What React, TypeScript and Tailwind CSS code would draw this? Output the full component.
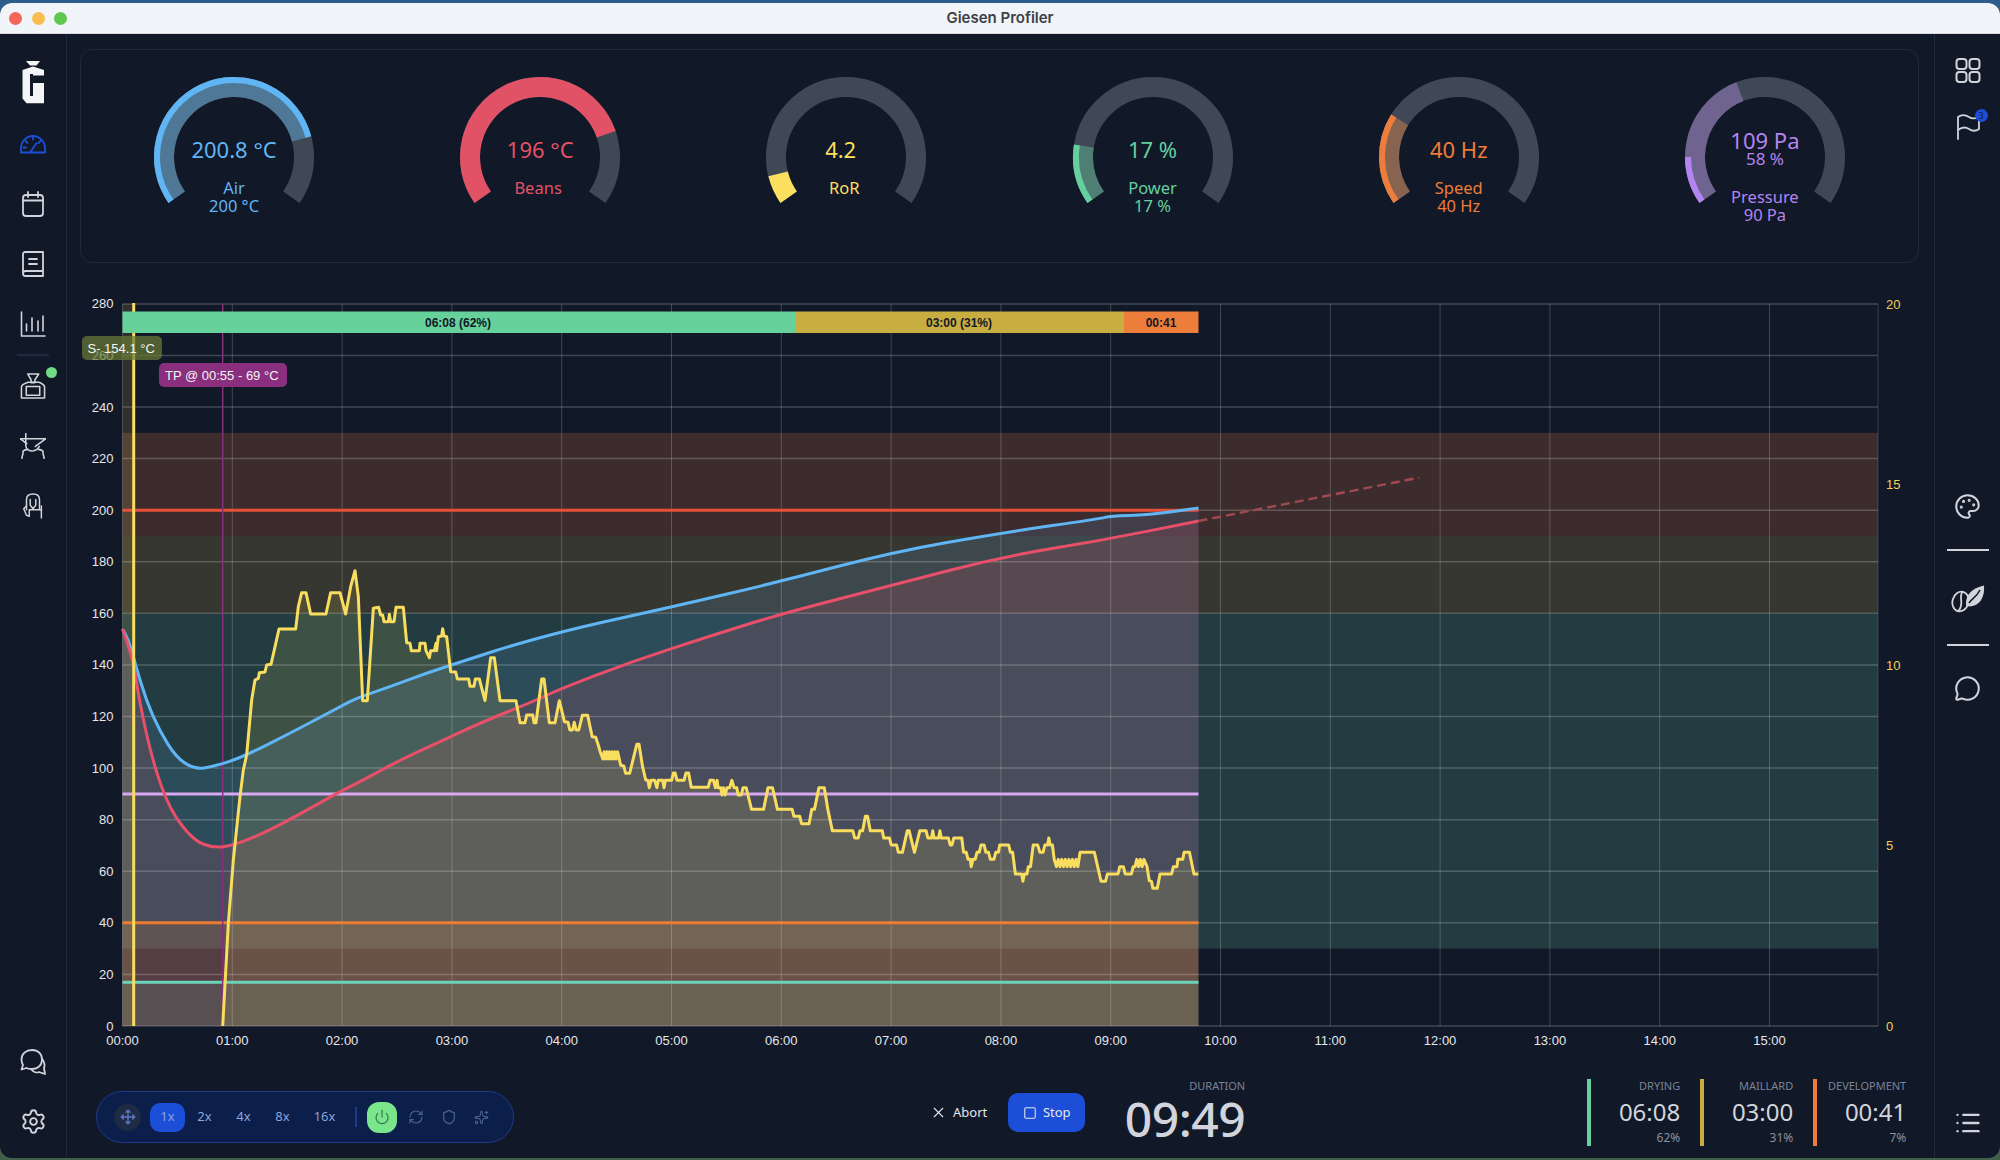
import { List, MessageCircle, Move, Palette, Power, RefreshCw, Settings, Shield, Sparkles, Square, X } from "lucide-react";

type Pt = [number, number];

const LEFT = 122.5;
const END = 1198.5;
const RIGHT = 1878;
const TOP = 304;
const BOTTOM = 1026;

const xAt = (min: number) => LEFT + min * 109.8;
const yAt = (v: number) => BOTTOM - v * 2.579;

const z8 = (p: Pt[]): Pt[] => p.map(([x, y]) => [80 + x / 3, 290 + y / 3]);
const z9 = (p: Pt[]): Pt[] => p.map(([x, y]) => [80 + x / 3, 700 + y / 3]);
const z10 = (p: Pt[]): Pt[] => p.map(([x, y]) => [560 + x / 2.24, 640 + y / 3]);

const zig = (x0: number, x1: number, step: number, a: number, b: number): Pt[] => {
  const out: Pt[] = [];
  let flip = false;
  for (let x = x0; x <= x1; x += step) {
    out.push([x, flip ? a : b]);
    flip = !flip;
  }
  return out;
};

const line = (p: Pt[]) => "M" + p.map((q) => q.join(" ")).join("L");

const smooth = (p: Pt[]) => {
  let d = `M${p[0][0]} ${p[0][1]}`;
  for (let i = 1; i < p.length - 1; i++) {
    const mx = (p[i][0] + p[i + 1][0]) / 2;
    const my = (p[i][1] + p[i + 1][1]) / 2;
    d += `Q${p[i][0]} ${p[i][1]} ${mx} ${my}`;
  }
  const last = p[p.length - 1];
  return d + `L${last[0]} ${last[1]}`;
};

const closeArea = `L${END} ${BOTTOM}L${LEFT} ${BOTTOM}Z`;

const air: Pt[] = [
  [122.5, 629], [128, 638], [135, 663], [146, 700], [160, 731.7], [176.7, 758], [195, 769.3], [213, 766.7], [243, 757],
  [293, 731.7], [340, 706.7], [356.7, 698], [390, 686.7], [426.7, 673], [466.7, 660], [513, 645], [580, 627], [672, 607],
  [780, 581.6], [893, 552], [1001, 533], [1100, 518.7], [1110, 516], [1148.5, 515], [1198.5, 508],
];

const beans: Pt[] = [
  [122.5, 629], [133, 657], [139, 700], [153, 763], [170, 810], [193, 840], [213, 848], [233, 845.7], [267, 831.7],
  [307, 810], [340, 791.7], [360, 781.7], [400, 760], [440, 741.7], [480, 723], [536.7, 700], [560, 689], [631.4, 661.7],
  [707, 637], [780.6, 614], [893, 585], [1001, 557], [1100, 540.7], [1198.5, 521],
];

// curve only, the drop at charge is drawn on its own
const ror: Pt[] = [
  [222.7, BOTTOM],
  ...z9([[445, 670], [460, 480], [480, 290], [490, 210], [500, 165], [515, 0]]),
  ...z8([
    [525, 1170], [535, 1165], [538, 1148], [555, 1146], [560, 1125], [573, 1123], [597, 1017], [647, 1017], [655, 950],
    [665, 908], [678, 908], [692, 972], [738, 972], [752, 908], [780, 908], [797, 972], [812, 890], [825, 842], [835, 920],
    [848, 1232], [862, 1232], [880, 955], [896, 952], [902, 975], [908, 975], [912, 995], [925, 995], [928, 973], [932, 995],
    [942, 995], [948, 952], [970, 952], [980, 1058], [990, 1060], [994, 1082], [1018, 1082], [1020, 1060], [1035, 1060],
    [1038, 1082], [1048, 1103], [1052, 1082], [1063, 1082], [1068, 1060], [1070, 1082], [1075, 1040], [1085, 1038], [1088, 1016],
    [1092, 1038], [1100, 1040], [1112, 1145], [1127, 1146], [1132, 1167], [1166, 1167], [1170, 1189], [1182, 1189], [1186, 1167],
    [1198, 1167], [1215, 1232], [1232, 1103], [1243, 1103], [1260, 1232], [1308, 1232],
  ]),
  [520, 722.7], [525, 722.7], [526.7, 715], [532.7, 715], [534, 722.7], [536, 722.7], [541.7, 679], [544, 679], [549.3, 722.7],
  [555, 722.7], [559.3, 700.7],
  ...z10([
    [10, 245], [18, 247], [22, 270], [28, 270], [32, 247], [36, 270], [42, 270], [50, 226], [62, 226], [72, 290], [80, 292],
    [85, 312], [90, 335], ...zig(96, 130, 3, 335, 357), [136, 376], [143, 378], [147, 400], [156, 400], [172, 313], [177, 313],
    [185, 380], [192, 420], [197, 421], [200, 443], [204, 421], [212, 421], [217, 443], [220, 421], [230, 421], [233, 443],
    [236, 421], [250, 421], [254, 399], [258, 399], [262, 421], [278, 421], [282, 399], [288, 399], [294, 442], [332, 442],
    [336, 421], [344, 421], [348, 443], [352, 421], [354, 443], [360, 443], [363, 465], [366, 443], [370, 465], [374, 443],
    [380, 443], [385, 421], [390, 443], [396, 443], [399, 465], [406, 465], [410, 443], [417, 443], [429, 508], [456, 508],
    [466, 443], [476, 443], [487, 508], [520, 508], [524, 529], [537, 529], [541, 551], [558, 551], [564, 508], [570, 508],
    [580, 443], [592, 443], [600, 508], [610, 572], [656, 572], [660, 594], [668, 594], [672, 572], [678, 572], [684, 529],
    [689, 529], [695, 572], [722, 572], [725, 594], [738, 594], [742, 615], [754, 615], [758, 637], [767, 637], [778, 572],
    [782, 572], [794, 637], [806, 572], [820, 572], [824, 594], [832, 594], [835, 572], [838, 594], [848, 594], [851, 572],
    [854, 594], [870, 594], [874, 615], [878, 615], [882, 594], [900, 594], [904, 637], [910, 637], [914, 658], [919, 658],
    [921, 680], [925, 658], [930, 658], [934, 637], [939, 637], [943, 615], [950, 615], [954, 637], [960, 637], [964, 658],
    [972, 658], [976, 637], [982, 637], [985, 615], [1005, 615], [1009, 637], [1014, 637], [1020, 702], [1034, 702], [1037, 724],
    [1040, 702], [1046, 702], [1049, 680], [1054, 680], [1060, 615], [1070, 615], [1075, 637], [1082, 637], [1086, 615], [1092, 615],
    [1095, 594], [1098, 615], [1103, 615], [1107, 658], ...zig(1112, 1160, 4, 658, 680), [1165, 637], [1197, 637], [1212, 724],
    [1222, 724], [1226, 702], [1250, 702], [1254, 680], [1262, 680], [1266, 702], [1280, 702], [1284, 680],
    ...zig(1288, 1310, 4, 658, 680), [1315, 680], [1320, 722], [1325, 724], [1328, 745], [1338, 745], [1344, 702], [1370, 702],
    [1374, 680], [1382, 680], [1384, 658], [1395, 658], [1398, 637], [1410, 637], [1420, 702], [1430, 702],
  ]),
];

const rorArea: Pt[] = [[LEFT, TOP], [133.7, TOP], [133.7, BOTTOM], ...ror];

const hLines = [
  { v: 200, c: "#e8503a" },
  { v: 90, c: "#d8a7f0" },
  { v: 40, c: "#ed7d30" },
  { v: 17, c: "#6ad4bb" },
];

const Chart = () => (
  <svg width={1867} height={770} viewBox="67 290 1867 770" className="block [font-family:'Liberation_Sans',sans-serif]">
    {/* target zones */}
    <rect x={LEFT} y={yAt(230)} width={RIGHT - LEFT} height={yAt(190) - yAt(230)} fill="#3d2c2e" />
    <rect x={LEFT} y={yAt(190)} width={RIGHT - LEFT} height={yAt(160) - yAt(190)} fill="#373731" />
    <rect x={LEFT} y={yAt(160)} width={RIGHT - LEFT} height={yAt(30) - yAt(160)} fill="#233c42" />

    {/* areas */}
    <path d={smooth(air) + closeArea} fill="rgba(96,180,240,0.14)" />
    <path d={smooth(beans) + closeArea} fill="rgba(226,82,102,0.16)" />
    <rect x={LEFT} y={yAt(40)} width={END - LEFT} height={BOTTOM - yAt(40)} fill="rgba(237,125,48,0.15)" />
    <rect x={LEFT} y={yAt(17)} width={END - LEFT} height={BOTTOM - yAt(17)} fill="rgba(106,212,187,0.12)" />
    <path d={line(rorArea) + closeArea} fill="rgba(249,221,95,0.13)" />

    {/* grid */}
    {Array.from({ length: 15 }, (_, i) => (i + 1) * 20).map((v) => (
      <line key={v} x1={LEFT} x2={RIGHT} y1={yAt(v)} y2={yAt(v)} stroke="rgba(255,255,255,0.2)" strokeWidth={1.5} />
    ))}
    {Array.from({ length: 16 }, (_, i) => i).map((m) => (
      <line key={m} x1={xAt(m)} x2={xAt(m)} y1={TOP} y2={BOTTOM} stroke="rgba(255,255,255,0.2)" strokeWidth={1} />
    ))}
    <line x1={RIGHT} x2={RIGHT} y1={TOP} y2={BOTTOM} stroke="rgba(255,255,255,0.15)" strokeWidth={1} />
    <line x1={LEFT} x2={RIGHT} y1={BOTTOM} y2={BOTTOM} stroke="rgba(255,255,255,0.2)" strokeWidth={1.5} />

    {hLines.map((l) => (
      <line key={l.v} x1={LEFT} x2={END} y1={yAt(l.v)} y2={yAt(l.v)} stroke={l.c} strokeWidth={3} />
    ))}

    <line x1={222.7} x2={222.7} y1={TOP} y2={BOTTOM} stroke="#8a2f7e" strokeWidth={1.5} />

    {/* axes */}
    {Array.from({ length: 15 }, (_, i) => i * 20).map((v) => (
      <text key={v} x={113.5} y={yAt(v) + 4.5} textAnchor="end" fontSize={13} fill="#e5e7eb">{v}</text>
    ))}
    {Array.from({ length: 16 }, (_, i) => i).map((m) => (
      <text key={m} x={xAt(m)} y={1045} textAnchor="middle" fontSize={13} fill="#e5e7eb">{String(m).padStart(2, "0")}:00</text>
    ))}
    {[0, 5, 10, 15, 20].map((v) => (
      <text key={v} x={1886} y={BOTTOM - v * 36.1 + 4.5} fontSize={13} fill="#f0d05a">{v}</text>
    ))}

    {/* curves */}
    <path d={line([[1198.5, 521], [1419, 477.7]])} fill="none" stroke="#a04a50" strokeWidth={2.4} strokeDasharray="9 5" />
    <path d={smooth(air)} fill="none" stroke="#60b5f5" strokeWidth={3} />
    <path d={smooth(beans)} fill="none" stroke="#e8506a" strokeWidth={3} />
    <line x1={133.7} x2={133.7} y1={303} y2={BOTTOM} stroke="#f9dd5f" strokeWidth={3} />
    <path d={line(ror)} fill="none" stroke="#f9dd5f" strokeWidth={3} strokeLinejoin="round" />

    {/* phases */}
    <rect x={LEFT} y={311.5} width={795 - LEFT} height={21.5} fill="#67d19c" />
    <rect x={795} y={311.5} width={329} height={21.5} fill="#c8ad40" />
    <rect x={1124} y={311.5} width={END - 1124} height={21.5} fill="#ed7d3a" />
    <text x={458} y={326.5} textAnchor="middle" fontSize={12} fontWeight={700} fill="#111827">06:08 (62%)</text>
    <text x={959} y={326.5} textAnchor="middle" fontSize={12} fontWeight={700} fill="#111827">03:00 (31%)</text>
    <text x={1161} y={326.5} textAnchor="middle" fontSize={12} fontWeight={700} fill="#111827">00:41</text>

    {/* event labels */}
    <rect x={82} y={336} width={80} height={24} rx={5} fill="rgba(104,124,54,0.72)" />
    <text x={87.5} y={352.5} fontSize={13} fill="#f3f4f6">S- 154.1 °C</text>
    <rect x={159} y={363} width={128} height={24} rx={5} fill="#8a2f7e" />
    <text x={165} y={379.5} fontSize={13} fill="#f3f4f6">TP @ 00:55 - 69 °C</text>
  </svg>
);

const polar = (r: number, deg: number): Pt => {
  const a = ((deg - 90) * Math.PI) / 180;
  return [82 + r * Math.cos(a), 82 + r * Math.sin(a)];
};

const arc = (r: number, sweep: number) => {
  const [x0, y0] = polar(r, -125);
  const [x1, y1] = polar(r, -125 + sweep);
  return `M${x0} ${y0}A${r} ${r} 0 ${sweep > 180 ? 1 : 0} 1 ${x1} ${y1}`;
};

type GaugeProps = {
  color: string;
  dim?: string;
  dimSweep?: number;
  sweep: number;
  thin?: boolean;
  value: string;
  percent?: string;
  label: string;
  sub?: string;
  textClass: string;
  top?: string;
};

const Gauge = ({ color, dim, dimSweep, sweep, thin, value, percent, label, sub, textClass, top }: GaugeProps) => (
  <div className="relative w-[164px] h-[164px]">
    <svg width={164} height={164}>
      <path d={arc(70, 250)} fill="none" stroke="#414855" strokeWidth={20} />
      {dim && <path d={arc(70, dimSweep ?? sweep)} fill="none" stroke={dim} strokeWidth={20} />}
      {thin ? (
        <path d={arc(77, sweep)} fill="none" stroke={color} strokeWidth={6} />
      ) : (
        <path d={arc(70, sweep)} fill="none" stroke={color} strokeWidth={20} />
      )}
    </svg>
    <div className={`absolute inset-x-0 ${top ?? "top-[60px]"} flex flex-col items-center ${textClass}`}>
      <div className="text-[22px] leading-[28px]">{value}</div>
      {percent && <div className="text-[17px] leading-[18px] -mt-[4px]">{percent}</div>}
      <div className={`text-[16.5px] leading-[18px] ${percent ? "mt-[20px]" : "mt-[16px]"}`}>{label}</div>
      {sub && <div className="text-[16.5px] leading-[18px]">{sub}</div>}
    </div>
  </div>
);

const iconClass = "w-[26px] h-[26px] text-[#d1d5db]";

const Logo = () => (
  <svg width={40} height={52} viewBox="0 0 40 52" fill="#f3f4f6">
    <path d="M13 6H27L23.5 10.5H17Z" />
    <path fillRule="evenodd" d="M20 11.5L31 15V48.3H13.5L9.5 43.5V15ZM17 19V41H20V28H31V20.5H20V19Z" />
  </svg>
);

const GaugeIcon = () => (
  <svg width={26} height={26} viewBox="0 0 26 26" fill="none" stroke="#1d4ed8" strokeWidth={1.8} strokeLinecap="round">
    <path d="M1 21.5V17.5C1 10.5 6.5 5 13 5S25 10.5 25 17.5V21.5Z" strokeLinejoin="round" />
    <path d="M10.5 21L16.5 12M13 5.5V8.5M5.5 10L7.5 12M3.5 16.5H6M20.5 10L18.5 12" />
  </svg>
);

const CalendarIcon = () => (
  <svg className={iconClass} viewBox="0 0 26 26" fill="none" stroke="currentColor" strokeWidth={1.8} strokeLinecap="round">
    <rect x={3} y={4} width={20} height={21} rx={3} />
    <path d="M3 9.5H23M8 1V6M18 1V6" />
  </svg>
);

const BookIcon = () => (
  <svg className={iconClass} viewBox="0 0 26 26" fill="none" stroke="currentColor" strokeWidth={1.8} strokeLinecap="round" strokeLinejoin="round">
    <path d="M3 22.5V3C3 2 4 1 5 1H23V25H5.5C4 25 3 24 3 22.5C3 21 4 20 5.5 20H23" />
    <path d="M9 8H17M9 13H17" />
  </svg>
);

const BarsIcon = () => (
  <svg className={iconClass} viewBox="0 0 26 26" fill="none" stroke="currentColor" strokeWidth={1.6} strokeLinecap="round">
    <path d="M1.5 1V25H25" />
    <path d="M6.5 20V13M12 20V7M18 20V10M23 20V5" />
  </svg>
);

const RoasterIcon = () => (
  <svg className={iconClass} viewBox="0 0 26 27" fill="none" stroke="currentColor" strokeWidth={1.6} strokeLinejoin="round">
    <path d="M7.5 1H19L15 7V10H11V7Z" />
    <path d="M1 14.5C1 12 5 10.5 8 9.5H19C21 10.5 25 12 25 14.5V26H1Z" />
    <path d="M6 14H20V23H6Z" />
  </svg>
);

const CoolerIcon = () => (
  <svg className={iconClass} viewBox="0 0 27 27" fill="none" stroke="currentColor" strokeWidth={1.6} strokeLinecap="round" strokeLinejoin="round">
    <path d="M0.5 6H26.5L16 14" />
    <path d="M0.5 6L7 11" />
    <path d="M6 0.5V13C6 17 10 19 14 18.5C17 18 19 16 20 14" />
    <path d="M2 26.5C2 23 4 21 3 19C5 17 7 17 8 17M25 26.5C25 23 23 21 24 19C22 17 21 17 19 17" />
  </svg>
);

const ChairIcon = () => (
  <svg className={iconClass} viewBox="0 0 26 28" fill="none" stroke="currentColor" strokeWidth={1.6} strokeLinecap="round" strokeLinejoin="round">
    <path d="M6 18V7C6 3 9 1 13 1C17 1 20 3 20 7V17" />
    <path d="M10 7V13L13 17L16 13V7" />
    <path d="M3 17L6 24L9 25V18M22 14V27M9 18H22M6 14L3 17" />
  </svg>
);

const ChatsIcon = () => (
  <svg className={iconClass} viewBox="0 0 26 26" fill="none" stroke="currentColor" strokeWidth={1.8} strokeLinecap="round" strokeLinejoin="round">
    <path d="M12 1C18 1 22 5 22 10.5C22 16 18 20 12 20C10 20 8 20 6.5 19L1.5 20.5L3 16C2 14.5 1.5 12.5 1.5 10.5C1.5 5 6 1 12 1Z" />
    <path d="M22 10C24.5 12 25 17 24 19L25 25L19 23C17 24 13.5 23.5 11 20" />
  </svg>
);

const GridIcon = () => (
  <svg className={iconClass} viewBox="0 0 26 26" fill="none" stroke="currentColor" strokeWidth={2}>
    <rect x={1.5} y={2} width={10} height={10} rx={3} />
    <rect x={14.5} y={2} width={10} height={10} rx={3} />
    <rect x={1.5} y={15} width={10} height={10} rx={3} />
    <rect x={14.5} y={15} width={10} height={10} rx={3} />
  </svg>
);

const FlagIcon = () => (
  <svg className={iconClass} viewBox="0 0 26 26" fill="none" stroke="currentColor" strokeWidth={1.8} strokeLinecap="round" strokeLinejoin="round">
    <path d="M3 25V3C7 0 11 1 14 3C17 5 20 5 24 3V15C20 18 17 17 14 15C11 13 7 13 3 16" />
  </svg>
);

const BeanIcon = () => (
  <svg width={34} height={28} viewBox="0 0 34 28" fill="none" stroke="#d1d5db" strokeWidth={1.8}>
    <ellipse cx={9.5} cy={16.5} rx={8} ry={10} transform="rotate(15 9.5 16.5)" />
    <path d="M11.5 7C7 12 14 18 7.5 26" />
    <path d="M15 20.5C14 10 21 3 33 0.5C34 12 29 21 18 21.5Z" fill="#d1d5db" stroke="none" />
    <path d="M18 18C21 13 25 13 29 5" stroke="#111827" strokeWidth={1.5} />
  </svg>
);

const Divider = () => <div className="h-[2px] w-[42px] bg-[#d1d5db]" />;

const speeds = [
  { label: "1x", w: "w-[35px]", active: true },
  { label: "2x", w: "w-[39px]" },
  { label: "4x", w: "w-[39px]" },
  { label: "8x", w: "w-[39px]" },
  { label: "16x", w: "w-[45px]" },
];

const phases = [
  { name: "DRYING", time: "06:08", pct: "62%", bar: "bg-[#67d19c]", w: "w-[113px]", pr: "pr-[20px]" },
  { name: "MAILLARD", time: "03:00", pct: "31%", bar: "bg-[#c8ad40]", w: "w-[113px]", pr: "pr-[20px]" },
  { name: "DEVELOPMENT", time: "00:41", pct: "7%", bar: "bg-[#ed7d3a]", w: "w-[93px]", pr: "pr-0" },
];

export default function App() {
  return (
    <div className="w-[2000px] h-[1160px] pt-[3px] pb-[2px] bg-gradient-to-b from-[#2d5d8b] to-[#3f5f4a] [font-family:'Noto_Sans',sans-serif] overflow-hidden">
      <div className="h-full flex flex-col rounded-[12px] overflow-hidden bg-[#111827]">
        {/* title bar */}
        <div className="relative h-[31px] shrink-0 bg-[#f1f4f8] flex items-center justify-center border-b border-[#d5d8dd]">
          <div className="absolute left-[9px] top-[9px] flex gap-[9.5px]">
            <span className="w-[13px] h-[13px] rounded-full bg-[#f2665a]" />
            <span className="w-[13px] h-[13px] rounded-full bg-[#f9bd4e]" />
            <span className="w-[13px] h-[13px] rounded-full bg-[#5fc94f]" />
          </div>
          <span className="text-[15px] font-semibold text-[#3c4046] [font-family:Inter,sans-serif]">Giesen Profiler</span>
        </div>

        <div className="flex-1 flex min-h-0">
          {/* left nav */}
          <div className="w-[67px] shrink-0 border-r border-[#1e2a3f] flex flex-col items-center pt-[21px] pb-[23px]">
            <Logo />
            <div className="mt-[24px] flex flex-col items-center gap-[34px]">
              <GaugeIcon />
              <CalendarIcon />
              <BookIcon />
              <BarsIcon />
            </div>
            <div className="my-[17px] h-[2px] w-[32px] bg-[#1e2a3f]" />
            <div className="flex flex-col items-center gap-[34px]">
              <div className="relative">
                <RoasterIcon />
                <span className="absolute -top-[6px] -right-[11px] w-[11px] h-[11px] rounded-full bg-[#6fdc85]" />
              </div>
              <CoolerIcon />
              <ChairIcon />
            </div>
            <div className="mt-auto flex flex-col items-center gap-[33px]">
              <ChatsIcon />
              <Settings size={27} strokeWidth={1.7} className="text-[#d1d5db]" />
            </div>
          </div>

          {/* main */}
          <div className="flex-1 min-w-0 flex flex-col">
            <div className="mt-[15px] ml-[13px] mr-[15px] h-[214px] shrink-0 rounded-[12px] border border-[#1e2a3f] grid grid-cols-6 justify-items-center pt-[25px]">
              <Gauge color="#60b5f5" dim="#4f7896" sweep={200} thin value="200.8 °C" label="Air" sub="200 °C" textClass="text-[#60b5f5]" />
              <Gauge color="#e25266" sweep={196} value="196 °C" label={"Beans\u00a0"} textClass="text-[#e25266]" />
              <Gauge color="#fbdf5f" sweep={21} value={"4.2\u00a0\u00a0"} label={"RoR\u00a0"} textClass="text-[#fbdf5f]" />
              <Gauge color="#65cfa0" dim="#4f7f72" sweep={44} thin value="17 %" label="Power" sub="17 %" textClass="text-[#65cfa0]" />
              <Gauge color="#ed7d3a" dim="#876350" sweep={67} thin value="40 Hz" label="Speed" sub="40 Hz" textClass="text-[#ed7d3a]" />
              <Gauge color="#b485f0" dim="#6f6390" dimSweep={104} sweep={35} thin value="109 Pa" percent="58 %" label="Pressure" sub="90 Pa" textClass="text-[#b485f0]" top="top-[51px]" />
            </div>

            <div className="mt-[27px] shrink-0">
              <Chart />
            </div>

            {/* bottom controls */}
            <div className="flex-1 flex items-start">
              <div className="ml-[29px] mt-[31px] w-[418px] h-[52px] shrink-0 rounded-full bg-[#0c1e4a] border border-[#1e3a8a] flex items-center pl-[17px]">
                <div className="w-[27px] h-[27px] rounded-full bg-[#1f2b45] flex items-center justify-center text-[#5b7cc9]">
                  <Move size={16} strokeWidth={2} />
                </div>
                <div className="ml-[9px] flex items-center text-[13px] text-[#8ba3db]">
                  {speeds.map((s) => (
                    <div
                      key={s.label}
                      className={`${s.w} h-[29px] rounded-[10px] flex items-center justify-center ${s.active ? "bg-[#1d4ed8]" : ""}`}
                    >
                      {s.label}
                    </div>
                  ))}
                </div>
                <div className="ml-[8px] h-[20px] w-[2px] bg-[#1e3a8a]" />
                <div className="ml-[10px] w-[30px] h-[31px] rounded-[12px] bg-[#7ae58b] flex items-center justify-center text-[#2e7a4a]">
                  <Power size={16} strokeWidth={1.8} />
                </div>
                <div className="ml-[11px] flex items-center gap-[17px] text-[#4f6494]">
                  <RefreshCw size={16} strokeWidth={1.7} />
                  <Shield size={16} strokeWidth={1.7} />
                  <Sparkles size={15} strokeWidth={1.7} />
                </div>
              </div>

              <div className="ml-[416px] mt-[33px] flex items-center">
                <div className="flex items-center gap-[6px] text-[13px] text-[#e5e7eb]">
                  <X size={17} strokeWidth={1.6} />
                  <span>Abort</span>
                </div>
                <div className="ml-[21px] w-[77px] h-[39px] rounded-[10px] bg-[#1d4ed8] flex items-center justify-center gap-[6px] text-[13px] text-[#e5e7eb]">
                  <Square size={14} strokeWidth={1.8} />
                  <span>Stop</span>
                </div>
              </div>

              <div className="ml-[40px] mt-[19px] w-[120px] shrink-0 flex flex-col items-end">
                <span className="text-[11px] leading-[14px] text-[#7b8494]">DURATION</span>
                <span className="text-[48px] leading-[52px] font-medium tracking-[-0.5px] text-[#d1d5db]">09:49</span>
              </div>

              <div className="ml-[342px] mt-[19px] flex">
                {phases.map((p) => (
                  <div key={p.name} className={`${p.w} h-[67px] flex shrink-0`}>
                    <div className={`w-[4px] h-full ${p.bar}`} />
                    <div className={`flex-1 flex flex-col items-end ${p.pr}`}>
                      <span className="text-[11px] leading-[14px] text-[#7b8494]">{p.name}</span>
                      <span className="mt-[4px] text-[24px] leading-[30px] text-[#d1d5db]">{p.time}</span>
                      <span className="mt-[4px] text-[12px] leading-[14px] text-[#8a909c]">{p.pct}</span>
                    </div>
                  </div>
                ))}
              </div>
            </div>
          </div>

          {/* right nav */}
          <div className="w-[66px] shrink-0 border-l border-[#1e2a3f] flex flex-col items-center pt-[23px] pb-[21px] text-[#d1d5db]">
            <GridIcon />
            <div className="relative mt-[31px]">
              <FlagIcon />
              <span className="absolute -top-[5px] -right-[7px] w-[13px] h-[13px] rounded-full bg-[#1d4ed8] flex items-center justify-center text-[9px] leading-none text-[#111827]">3</span>
            </div>
            <Palette size={27} strokeWidth={1.8} className="mt-[353px]" />
            <div className="mt-[29px]"><Divider /></div>
            <div className="mt-[34px]"><BeanIcon /></div>
            <div className="mt-[31px]"><Divider /></div>
            <MessageCircle size={27} strokeWidth={1.8} className="mt-[29px]" />
            <List size={28} strokeWidth={2} className="mt-auto" />
          </div>
        </div>
      </div>
    </div>
  );
}
